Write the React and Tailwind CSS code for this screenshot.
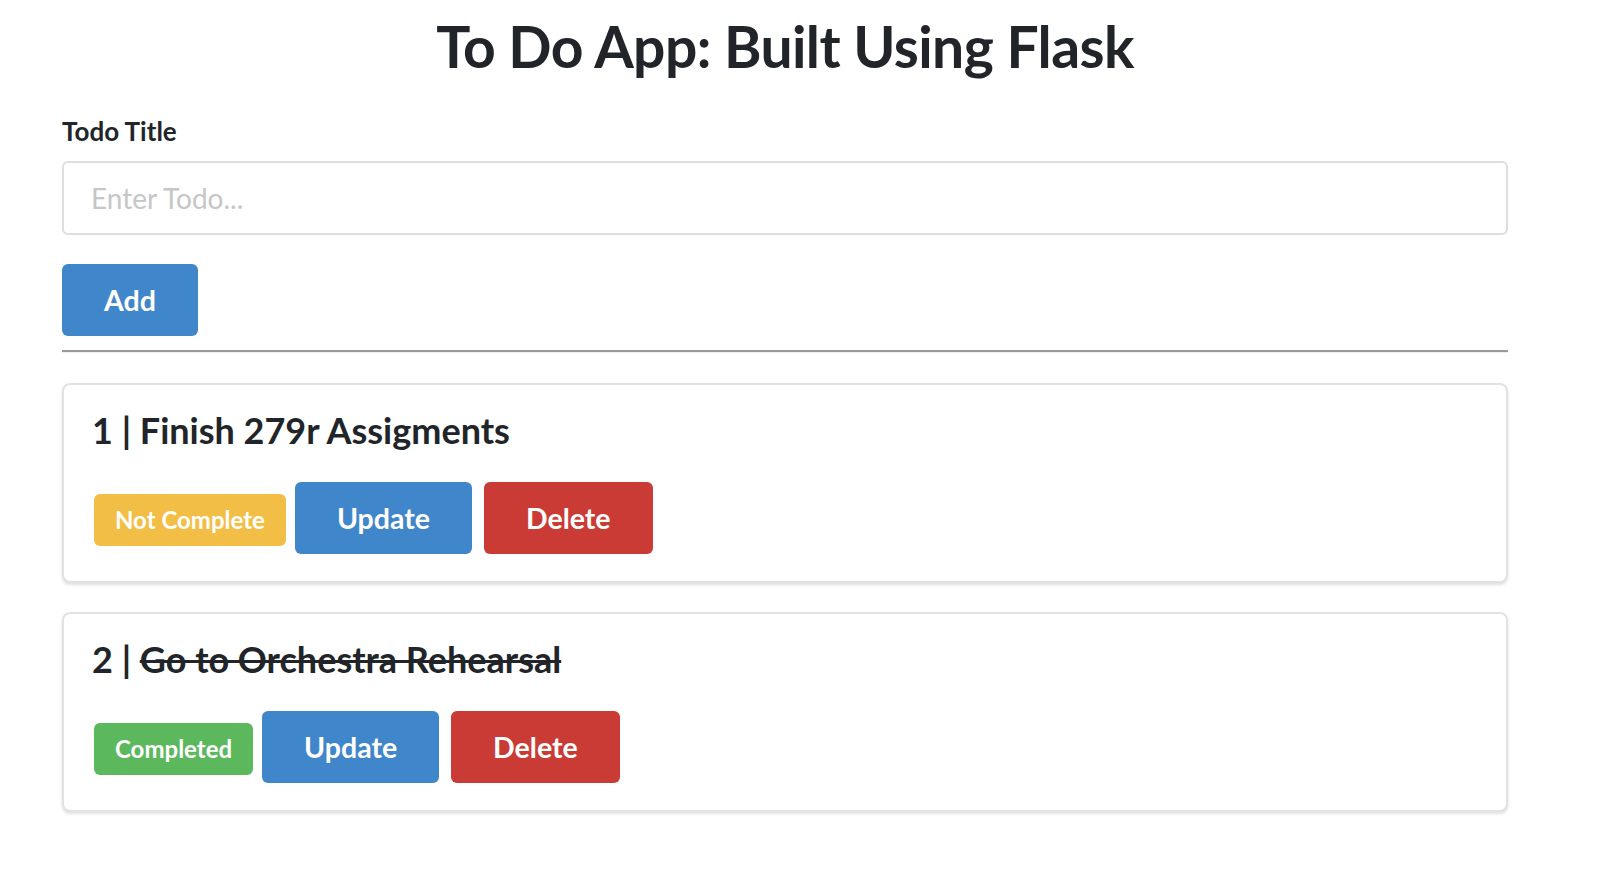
import { useState } from "react";

const todos = [
  { id: 1, title: "Finish 279r Assigments", complete: false },
  { id: 2, title: "Go to Orchestra Rehearsal", complete: true },
];

function TodoCard({ todo }) {
  return (
    <div className="mb-[29px] rounded-[8px] border-2 border-[#e2e2e2] bg-white pl-[28px] pr-[28px] pt-[24px] pb-[27px] shadow-[0_2px_3px_rgba(0,0,0,0.12)]">
      <h4 className="text-[36px] leading-[43px] font-bold text-[#212529]">
        {todo.id} |{" "}
        <span className={todo.complete ? "line-through decoration-[2.5px]" : ""}>
          {todo.title}
        </span>
      </h4>

      <div className="mt-[30px] flex items-start">
        {todo.complete ? (
          <span className="ml-[2px] mt-[12px] flex h-[52px] items-center rounded-[6px] bg-[#5cb85c] px-[21px] text-[24px] font-bold text-white">
            Completed
          </span>
        ) : (
          <span className="ml-[2px] mt-[12px] flex h-[52px] items-center rounded-[6px] bg-[#f3be45] px-[21px] text-[24px] font-bold text-white">
            Not Complete
          </span>
        )}
        <button className="ml-[9px] h-[72px] rounded-[6px] bg-[#4086ca] px-[42px] text-[28.5px] font-bold text-white">
          Update
        </button>
        <button className="ml-[12px] h-[72px] rounded-[6px] bg-[#c93b34] px-[42px] text-[28.5px] font-bold text-white">
          Delete
        </button>
      </div>
    </div>
  );
}

export default function App() {
  const [value, setValue] = useState("");

  return (
    <div className="min-h-screen bg-white font-['Lato',sans-serif] text-[#212529]">
      <div className="ml-[62px] w-[1446px]">
        <h1 className="pt-[10px] text-center text-[57px] leading-[72px] font-bold tracking-[-0.6px]">
          To Do App: Built Using Flask
        </h1>

        <label className="mt-[31px] block text-[26px] leading-[36px] font-bold">
          Todo Title
        </label>
        <input
          value={value}
          onChange={(e) => setValue(e.target.value)}
          placeholder="Enter Todo..."
          className="mt-[12px] block h-[74px] w-full rounded-[6px] border-2 border-[#dedede] px-[27px] text-[28px] outline-none placeholder:text-[#c6c6c6]"
        />

        <button className="mt-[29px] h-[72px] rounded-[6px] bg-[#4086ca] px-[42px] text-[28.5px] font-bold text-white">
          Add
        </button>

        <hr className="mt-[14px] border-t-2 border-b border-t-[#999999] border-b-[#eeeeee]" />

        <div className="mt-[30px]">
          {todos.map((t) => (
            <TodoCard key={t.id} todo={t} />
          ))}
        </div>
      </div>
    </div>
  );
}
